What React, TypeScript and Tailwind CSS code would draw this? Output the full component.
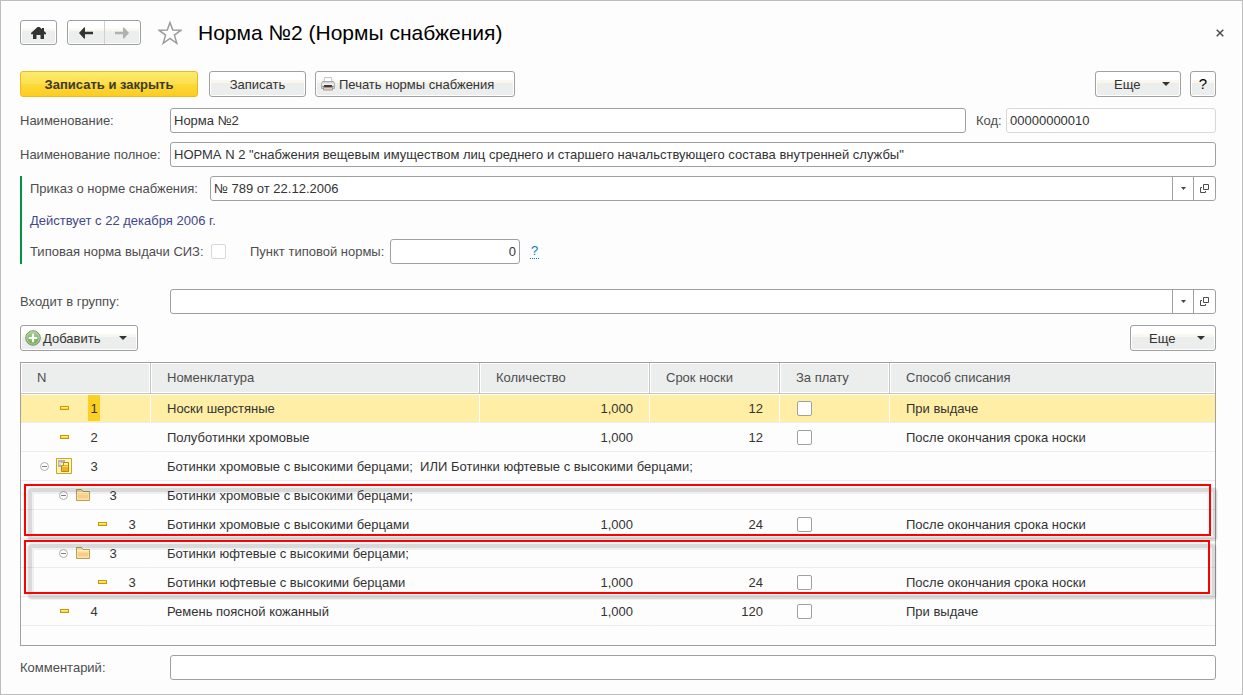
import { useState } from "react";
import type { ComponentProps, ReactNode } from "react";
import clsx from "clsx";

type RowKind = "item" | "choice" | "folder";

type NormRow = {
  id: string;
  n: number;
  depth: number;
  kind: RowKind;
  name: string;
  quantity?: string;
  term?: number;
  writeOff?: string;
};

const rows: NormRow[] = [
  { id: "1", n: 1, depth: 0, kind: "item", name: "Носки шерстяные", quantity: "1,000", term: 12, writeOff: "При выдаче" },
  { id: "2", n: 2, depth: 0, kind: "item", name: "Полуботинки хромовые", quantity: "1,000", term: 12, writeOff: "После окончания срока носки" },
  { id: "3", n: 3, depth: 0, kind: "choice", name: "Ботинки хромовые с высокими берцами;  ИЛИ Ботинки юфтевые с высокими берцами;" },
  { id: "3a", n: 3, depth: 1, kind: "folder", name: "Ботинки хромовые с высокими берцами;" },
  { id: "3a1", n: 3, depth: 2, kind: "item", name: "Ботинки хромовые с высокими берцами", quantity: "1,000", term: 24, writeOff: "После окончания срока носки" },
  { id: "3b", n: 3, depth: 1, kind: "folder", name: "Ботинки юфтевые с высокими берцами;" },
  { id: "3b1", n: 3, depth: 2, kind: "item", name: "Ботинки юфтевые с высокими берцами", quantity: "1,000", term: 24, writeOff: "После окончания срока носки" },
  { id: "4", n: 4, depth: 0, kind: "item", name: "Ремень поясной кожанный", quantity: "1,000", term: 120, writeOff: "При выдаче" },
];

const depthPadding = ["pl-[17px]", "pl-[36px]", "pl-[55px]"];

const buttonFace =
  "border border-[#a0a0a0] bg-[linear-gradient(#fff_32%,#faf7ee_34%,#faf7ee_44%,#eceeed_46%)] shadow-[inset_0_0_0_1px_#fff]";

function HomeIcon() {
  return (
    <svg width="15" height="12" viewBox="0 0 15 12" fill="#333" aria-hidden="true">
      <path d="M6.500 0h2L11 2.200V1h2v3l2 2v1.200h-2V12H9.500V8h-4v4H2V7.200H0V6z" />
    </svg>
  );
}

function ArrowIcon({ back }: { back?: boolean }) {
  return (
    <svg width="14" height="12" viewBox="0 0 14 12" fill={back ? "#333" : "#b0b0b0"} aria-hidden="true">
      {back ? (
        <path d="M6 .3V4.800H14v2.400H6v4.500L5 11.500 0 6 5 .5z" />
      ) : (
        <path d="M8 .3V4.800H0v2.400h8v4.500l1-.2L14 6 9 .5z" />
      )}
    </svg>
  );
}

function StarIcon() {
  return (
    <svg width="24" height="24" viewBox="0 0 24 24" fill="#fff" stroke="#9c9c9c" strokeWidth="1.500" aria-hidden="true">
      <path d="m12 1.500 2.700 7.600 8.300.1-6.600 4.900 2.400 8.200L12 17.500l-6.800 4.800 2.400-8.200L1 9.200l8.300-.1z" />
    </svg>
  );
}

function CloseIcon() {
  return (
    <svg width="8" height="8" viewBox="0 0 8 8" stroke="#4d4d4d" strokeWidth="1.500" aria-hidden="true">
      <path d="m.7.7 6.600 6.600M7.300.7.7 7.300" />
    </svg>
  );
}

function PrinterIcon() {
  return (
    <svg width="14" height="14" viewBox="0 0 14 14" aria-hidden="true">
      <path d="M3.500.5h7L11 6H3z" fill="#fff" stroke="#c4c4c4" />
      <path d="M1.500 4.500h11l1 2v5H.5v-5z" fill="#d2d2d2" stroke="#aaa" />
      <path d="M1 6.500h12v2H1z" fill="#f2f2f2" />
      <path d="M3 8h8v2H3z" fill="#3a3a3a" />
      <path d="M2.500 10.500h9v2.500h-9z" fill="#efcdb0" stroke="#999" />
      <path d="M1.500 9.500h2M10.500 9.500h2" stroke="#777" />
    </svg>
  );
}

function PlusIcon() {
  return (
    <svg width="16" height="16" viewBox="0 0 16 16" aria-hidden="true">
      <defs>
        <linearGradient id="plusFill" x1="0" y1="0" x2="0" y2="1">
          <stop offset="0" stopColor="#a9cf92" />
          <stop offset="1" stopColor="#6aa84f" />
        </linearGradient>
      </defs>
      <circle cx="8" cy="8" r="7.300" fill="url(#plusFill)" stroke="#83907e" />
      <circle cx="8" cy="8" r="6.200" fill="none" stroke="#c4dfb5" strokeWidth=".7" />
      <path d="M8 3.800v8.400M3.800 8h8.400" stroke="#fff" strokeWidth="2.200" />
    </svg>
  );
}

function CaretIcon({ small }: { small?: boolean }) {
  return small ? (
    <svg width="5" height="3" viewBox="0 0 5 3" fill="#444" aria-hidden="true">
      <path d="M0 0h5L2.500 3z" />
    </svg>
  ) : (
    <svg width="8" height="4" viewBox="0 0 8 4" fill="#333" aria-hidden="true">
      <path d="M0 0h8L4 4z" />
    </svg>
  );
}

function OpenIcon() {
  return (
    <svg width="10" height="10" viewBox="0 0 10 10" fill="none" stroke="#4d4d4d" aria-hidden="true">
      <path d="M3.500.5h5v5h-5zM2 3.500H.5v5h5V7" />
    </svg>
  );
}

function ItemIcon() {
  return (
    <svg width="9" height="4" viewBox="0 0 9 4" aria-hidden="true">
      <path d="M0 0h9v4H0z" fill="#c79a00" />
      <path d="M1 1h7v2H1z" fill="#ffd93b" />
      <path d="M1 1h7v1H1z" fill="#ffeb8c" />
    </svg>
  );
}

function FolderIcon() {
  return (
    <svg width="14" height="12" viewBox="0 0 14 12" aria-hidden="true">
      <path d="M.5 11.500V.5h5l1.500 2h6.500v9z" fill="#fbe3a0" stroke="#b5a05a" />
      <path d="M1 3.500h12" stroke="#fff3c8" />
      <path d="M2 5.500h10v4H2z" fill="#fbc98a" />
    </svg>
  );
}

function ChoiceIcon() {
  return (
    <svg width="16" height="16" viewBox="0 0 16 16" aria-hidden="true">
      <path d="M.5.5h15v15H.5z" fill="#fff6b8" stroke="#c9a52c" />
      <path d="M2 2h7v3H5v4H2z" fill="#b4b4b8" />
      <path d="M3 4h2v3H3z" fill="#d8d8da" />
      <path d="M5.500 13.500v-6h2v-3h5v9z" fill="#f2b01e" stroke="#b88a10" />
      <path d="M8 5h4v2H8z" fill="#fff0b0" />
      <path d="M6 8.500h6" stroke="#ffdc6a" />
    </svg>
  );
}

function CollapseIcon() {
  return (
    <svg width="9" height="9" viewBox="0 0 9 9" fill="none" aria-hidden="true">
      <circle cx="4.500" cy="4.500" r="4" stroke="#b0b0b0" />
      <path d="M2 4.500h5" stroke="#808080" />
    </svg>
  );
}

function Button({ className, children, ...props }: ComponentProps<"button">) {
  return (
    <button
      type="button"
      className={clsx("flex h-[26px] shrink-0 items-center rounded-[3px]", buttonFace, className)}
      {...props}
    >
      {children}
    </button>
  );
}

function ButtonLabel({ children }: { children: ReactNode }) {
  return <span className="pt-[2px]">{children}</span>;
}

function MoreButton() {
  return (
    <Button className="w-[86px] justify-between pl-[18px] pr-[10px]">
      <ButtonLabel>Еще</ButtonLabel>
      <CaretIcon />
    </Button>
  );
}

function TextInput({ className, ...props }: ComponentProps<"input">) {
  return (
    <input
      type="text"
      className={clsx(
        "h-[25px] min-w-0 rounded-[3px] border bg-white px-[3px] text-[#333] outline-none",
        className,
      )}
      {...props}
    />
  );
}

function PickerInput({ id, value }: { id: string; value?: string }) {
  return (
    <div className="flex h-[25px] min-w-0 flex-1 rounded-[3px] border border-[#a0a0a0] bg-white">
      <input id={id} type="text" defaultValue={value} className="min-w-0 flex-1 bg-transparent px-[3px] text-[#333] outline-none" />
      <button type="button" aria-label="Выбрать" className="flex w-[21px] items-center justify-center border-l border-[#a0a0a0]">
        <CaretIcon small />
      </button>
      <button type="button" aria-label="Открыть" className="flex w-[22px] items-center justify-center border-l border-[#a0a0a0]">
        <OpenIcon />
      </button>
    </div>
  );
}

function Checkbox({ className, ...props }: ComponentProps<"input">) {
  return (
    <input
      type="checkbox"
      className={clsx("block size-[15px] shrink-0 appearance-none rounded-[2px] border bg-white checked:bg-[#a0a0a0]", className)}
      {...props}
    />
  );
}

function HeadCell({ children, last }: { children: ReactNode; last?: boolean }) {
  return (
    <th
      className={clsx(
        "h-[31px] border-b border-[#c4c4c4] bg-[#eceeed] pl-4 text-left font-normal text-[#4d4d4d] shadow-[inset_0_0_0_1px_#fff]",
        !last && "border-r",
      )}
    >
      {children}
    </th>
  );
}

function Row({ row, selected, onSelect }: { row: NormRow; selected: boolean; onSelect: () => void }) {
  const cell = clsx("h-[29px] border-b border-b-[#ececec] p-0", selected && "bg-[#ffeea5] shadow-[inset_0_1px_#fff]");
  const divider = clsx("border-r", selected ? "border-r-white" : "border-r-transparent");

  return (
    <tr onClick={onSelect}>
      <td className={clsx(cell, divider)}>
        <div className={clsx("flex h-7 items-center", depthPadding[row.depth])}>
          <span className="flex w-[13px] justify-center">
            {row.kind !== "item" && (
              <button type="button" aria-label="Свернуть">
                <CollapseIcon />
              </button>
            )}
          </span>
          <span className="ml-[5px] flex w-4 justify-center">
            {row.kind === "item" && <ItemIcon />}
            {row.kind === "folder" && <FolderIcon />}
            {row.kind === "choice" && <ChoiceIcon />}
          </span>
          <span className={clsx("ml-4 h-[26px] w-3 text-center leading-7", selected && "bg-[#fbd022]")}>{row.n}</span>
        </div>
      </td>
      {row.kind === "item" ? (
        <>
          <td className={clsx(cell, divider)}>
            <div className="pl-4 pt-[2px]">{row.name}</div>
          </td>
          <td className={clsx(cell, divider)}>
            <div className="pr-4 pt-[2px] text-right">{row.quantity}</div>
          </td>
          <td className={clsx(cell, divider)}>
            <div className="pr-4 pt-[2px] text-right">{row.term}</div>
          </td>
          <td className={clsx(cell, divider)}>
            <div className="pl-[17px]">
              <Checkbox aria-label="За плату" className="border-[#a0a0a0]" />
            </div>
          </td>
          <td className={cell}>
            <div className="pl-4 pt-[2px]">{row.writeOff}</div>
          </td>
        </>
      ) : (
        <td colSpan={5} className={cell}>
          <div className="whitespace-pre pl-4 pt-[2px]">{row.name}</div>
        </td>
      )}
    </tr>
  );
}

// Red frame with an offset grey shadow line, drawn over a group of rows
function Highlight({ className }: { className: string }) {
  return (
    <div className={clsx("pointer-events-none absolute", className)}>
      <div className="absolute -right-[6px] -bottom-[5px] left-1 top-1 rounded-[4px] border-4 border-black/14 shadow-[0_0_0_1px_rgba(0,0,0,0.05),inset_0_0_0_2px_rgba(0,0,0,0.05)]" />
      <div className="absolute inset-0 border-2 border-[#f00]" />
    </div>
  );
}

export default function App() {
  const [selectedId, setSelectedId] = useState("1");

  return (
    <main className="flex min-h-screen flex-col border border-[#bdbdbd] bg-[#fdfdfd] pb-[14px] pl-[19px] pr-[26px] pt-[19px] font-['Liberation_Sans',Arial,sans-serif] text-[13px] leading-4 text-[#333]">
      <header className="-mr-2 flex h-[25px] items-center">
        <button type="button" aria-label="Начальная страница" className={clsx("flex h-[25px] w-[37px] items-center justify-center rounded-[3px]", buttonFace)}>
          <HomeIcon />
        </button>
        <div className={clsx("ml-[10px] flex h-[25px] w-[74px] rounded-[3px]", buttonFace)}>
          <button type="button" aria-label="Назад" className="flex flex-1 items-center justify-center border-r border-[#d0d0d0]">
            <ArrowIcon back />
          </button>
          <button type="button" aria-label="Вперед" className="flex flex-1 items-center justify-center">
            <ArrowIcon />
          </button>
        </div>
        <button type="button" aria-label="В избранное" className="ml-[17px]">
          <StarIcon />
        </button>
        <h1 className="ml-4 text-[21px] leading-6 text-black">Норма №2 (Нормы снабжения)</h1>
        <button type="button" aria-label="Закрыть" className="ml-auto">
          <CloseIcon />
        </button>
      </header>

      <div className="mt-[26px] flex">
        <button
          type="button"
          className="h-[26px] w-[178px] rounded-[3px] border border-[#f0b81c] bg-[linear-gradient(#fdea6e,#fbe04f_48%,#fcd93a_50%,#fccd20)] pt-[2px] font-bold text-[#3d3a2a]"
        >
          Записать и закрыть
        </button>
        <Button className="ml-[11px] w-[97px] justify-center">
          <ButtonLabel>Записать</ButtonLabel>
        </Button>
        <Button className="ml-[9px] w-[200px] gap-1 pl-[5px]">
          <PrinterIcon />
          <ButtonLabel>Печать нормы снабжения</ButtonLabel>
        </Button>
        <div className="ml-auto flex gap-[9px]">
          <MoreButton />
          <Button aria-label="Справка" className="w-[26px] justify-center text-[15px] text-black">
            ?
          </Button>
        </div>
      </div>

      <form className="mt-[11px] text-[#4d4d4d]" onSubmit={(event) => event.preventDefault()}>
        <div className="flex items-center">
          <label htmlFor="name" className="w-[150px] shrink-0">Наименование:</label>
          <TextInput id="name" defaultValue="Норма №2" className="flex-1 border-[#a0a0a0]" />
          <label htmlFor="code" className="ml-[10px] w-[30px] shrink-0">Код:</label>
          <TextInput id="code" defaultValue="00000000010" readOnly className="w-[210px] border-[#d8d8d8]" />
        </div>
        <div className="mt-[9px] flex items-center">
          <label htmlFor="fullName" className="w-[150px] shrink-0">Наименование полное:</label>
          <TextInput
            id="fullName"
            defaultValue={'НОРМА N 2 "снабжения вещевым имуществом лиц среднего и старшего начальствующего состава внутренней службы"'}
            className="flex-1 border-[#a0a0a0]"
          />
        </div>

        <div className="mt-[9px] border-l-2 border-[#009646] pl-2">
          <div className="flex items-center">
            <label htmlFor="order" className="w-[180px] shrink-0">Приказ о норме снабжения:</label>
            <PickerInput id="order" value="№ 789 от 22.12.2006" />
          </div>
          <p className="mt-3 text-[#42478c]">Действует с 22 декабря 2006 г.</p>
          <div className="mt-[10px] flex items-center">
            <label htmlFor="typical" className="w-[181px]">Типовая норма выдачи СИЗ:</label>
            <Checkbox id="typical" className="border-[#d8d8d8]" />
            <label htmlFor="point" className="ml-6 w-[140px]">Пункт типовой нормы:</label>
            <TextInput id="point" defaultValue="0" className="w-[130px] border-[#a0a0a0] text-right" />
            <a href="#help" className="ml-[10px] w-[9px] border-b border-dotted border-[#0a78c0] text-center leading-[14px] text-[#0a78c0]">?</a>
          </div>
        </div>

        <div className="mt-[25px] flex items-center">
          <label htmlFor="group" className="w-[150px] shrink-0">Входит в группу:</label>
          <PickerInput id="group" />
        </div>
      </form>

      <div className="mt-[11px] flex justify-between">
        <Button className="w-[118px] justify-between pl-1 pr-[10px]">
          <span className="flex items-center gap-[2px]">
            <PlusIcon />
            <ButtonLabel>Добавить</ButtonLabel>
          </span>
          <CaretIcon />
        </Button>
        <MoreButton />
      </div>

      <section className="relative mt-[11px] flex-1 border border-[#a0a0a0] bg-[#fdfdfd]">
        <table className="w-full table-fixed border-separate border-spacing-0">
          <colgroup>
            <col className="w-[130px]" />
            <col className="w-[329px]" />
            <col className="w-[170px]" />
            <col className="w-[130px]" />
            <col className="w-[110px]" />
            <col />
          </colgroup>
          <thead>
            <tr>
              <HeadCell>N</HeadCell>
              <HeadCell>Номенклатура</HeadCell>
              <HeadCell>Количество</HeadCell>
              <HeadCell>Срок носки</HeadCell>
              <HeadCell>За плату</HeadCell>
              <HeadCell last>Способ списания</HeadCell>
            </tr>
          </thead>
          <tbody>
            {rows.map((row) => (
              <Row key={row.id} row={row} selected={row.id === selectedId} onSelect={() => setSelectedId(row.id)} />
            ))}
          </tbody>
        </table>
        <Highlight className="left-[3px] right-1 top-[121px] h-[52px]" />
        <Highlight className="left-[3px] right-[5px] top-[177px] h-[54px]" />
      </section>

      <div className="mt-[9px] flex items-center text-[#4d4d4d]">
        <label htmlFor="comment" className="w-[150px] shrink-0">Комментарий:</label>
        <TextInput id="comment" className="flex-1 border-[#a0a0a0]" />
      </div>
    </main>
  );
}
